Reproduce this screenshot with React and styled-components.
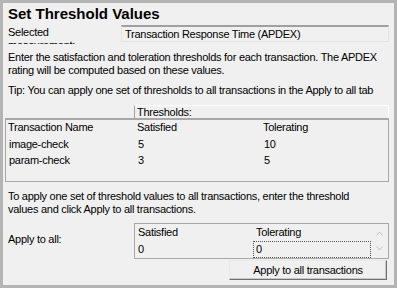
import React from "react";
import styled, { createGlobalStyle } from "styled-components";

const GlobalStyle = createGlobalStyle`
  html, body {
    margin: 0;
    padding: 0;
    background: #b4b4b4;
  }
  * {
    box-sizing: border-box;
  }
`;

const Frame = styled.div`
  width: 397px;
  height: 288px;
  border: 3px solid #b4b4b4;
  background: #f0f0f0;
  padding: 2px 5px 0 5px;
  font-family: "Liberation Sans", Arial, sans-serif;
  font-size: 11px;
  letter-spacing: -0.27px;
  color: #000;
  display: flex;
  flex-direction: column;
`;

const Title = styled.h1`
  margin: 0;
  font-size: 15px;
  line-height: 18px;
  font-weight: bold;
  letter-spacing: 0;
  height: 19px;
`;

const FieldRow = styled.div`
  display: flex;
  align-items: flex-start;
  height: 20px;
`;

const Label = styled.div`
  width: ${(p) => p.$width || 113}px;
  flex: none;
  line-height: 13px;
  height: ${(p) => p.$height || 20}px;
  overflow: hidden;
  padding-top: ${(p) => p.$pad || 2}px;
  padding-right: ${(p) => p.$padRight || 0}px;
`;

const ReadOnlyBox = styled.div`
  flex: 1;
  height: 17px;
  margin-top: 1px;
  border: 1px solid #e3e3e3;
  border-top: 2px solid #a0a0a0;
  background: #f0f0f0;
  padding: 1px 3px 0;
  line-height: 13px;
`;

const Para = styled.p`
  margin: ${(p) => p.$top || 0}px 0 0 0;
  max-width: ${(p) => p.$maxWidth || 400}px;
  line-height: 13px;
`;

const HeaderTab = styled.div`
  margin: 8px 0 0 126px;
  height: 13px;
  border: 1px solid #ffffff;
  border-left-color: #a0a0a0;
  border-bottom: none;
  padding-left: 2px;
  line-height: 12px;
`;

const ListView = styled.div`
  margin-left: -3px;
  height: 64px;
  border: 1px solid #a8a8a8;
  border-top-width: 2px;
  padding: 0 0 0 2px;
`;

const ListRow = styled.div`
  display: grid;
  grid-template-columns: 129px 126px 1fr;
  height: ${(p) => (p.$header ? 17 : 16)}px;
  line-height: 14px;
  padding-left: ${(p) => (p.$header ? 0 : 1)}px;
`;

const ApplyRow = styled.div`
  display: flex;
  margin-top: 7px;
`;

const Grid = styled.div`
  flex: 1;
  height: 36px;
  border: 1px solid #a8a8a8;
  display: flex;
  background: #f0f0f0;
`;

const GridBody = styled.div`
  flex: 1;
  display: flex;
  flex-direction: column;
`;

const GridRow = styled.div`
  display: grid;
  grid-template-columns: 118px 1fr;
  height: 17px;
  line-height: 15px;
`;

const GridCell = styled.div`
  padding-left: 2px;
  border: 1px ${(p) => (p.$focus ? "dotted #555" : "solid transparent")};
`;

const ScrollBar = styled.div`
  width: 17px;
  display: flex;
  flex-direction: column;
  align-items: center;
  justify-content: space-around;
  padding: 2px 0;
  color: #c2c2c2;
`;

const Arrow = styled.svg`
  width: 7px;
  height: 5px;
`;

const ButtonRow = styled.div`
  display: flex;
  justify-content: flex-end;
  margin-top: 1px;
  padding-right: 2px;
`;

const Button = styled.button`
  width: 158px;
  height: 20px;
  background: #f0f0f0;
  border: 1px solid;
  border-color: #e8e8e8 #707070 #707070 #e8e8e8;
  box-shadow: inset -1px -1px 0 #c8c8c8;
  font-family: "Liberation Sans", Arial, sans-serif;
  font-size: 11px;
  letter-spacing: -0.27px;
  color: #000;
  padding: 0;
`;

export default function App() {
  return (
    <>
      <GlobalStyle />
      <Frame>
        <Title>Set Threshold Values</Title>
        <FieldRow>
          <Label $padRight={30}>Selected measurement:</Label>
          <ReadOnlyBox>Transaction Response Time (APDEX)</ReadOnlyBox>
        </FieldRow>
        <Para $top={7}>
          Enter the satisfaction and toleration thresholds for each transaction. The APDEX
          rating will be computed based on these values.
        </Para>
        <Para $top={7}>
          Tip: You can apply one set of thresholds to all transactions in the Apply to all tab
        </Para>
        <HeaderTab>Thresholds:</HeaderTab>
        <ListView>
          <ListRow $header>
            <span>Transaction Name</span>
            <span>Satisfied</span>
            <span>Tolerating</span>
          </ListRow>
          <ListRow>
            <span>image-check</span>
            <span>5</span>
            <span>10</span>
          </ListRow>
          <ListRow>
            <span>param-check</span>
            <span>3</span>
            <span>5</span>
          </ListRow>
        </ListView>
        <Para $top={8} $maxWidth={360}>
          To apply one set of threshold values to all transactions, enter the threshold
          values and click Apply to all transactions.
        </Para>
        <ApplyRow>
          <Label $width={126} $height={36} $pad={10}>Apply to all:</Label>
          <Grid>
            <GridBody>
              <GridRow>
                <GridCell>Satisfied</GridCell>
                <GridCell>Tolerating</GridCell>
              </GridRow>
              <GridRow>
                <GridCell>0</GridCell>
                <GridCell $focus>0</GridCell>
              </GridRow>
            </GridBody>
            <ScrollBar>
              <Arrow viewBox="0 0 7 5">
                <path d="M0.5 4.5 L3.5 1 L6.5 4.5" fill="none" stroke="currentColor" />
              </Arrow>
              <Arrow viewBox="0 0 7 5">
                <path d="M0.5 0.5 L3.5 4 L6.5 0.5" fill="none" stroke="currentColor" />
              </Arrow>
            </ScrollBar>
          </Grid>
        </ApplyRow>
        <ButtonRow>
          <Button>Apply to all transactions</Button>
        </ButtonRow>
      </Frame>
    </>
  );
}
